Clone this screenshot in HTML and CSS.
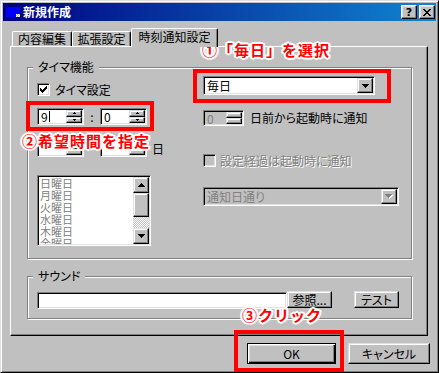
FILE: index.html
```html
<!DOCTYPE html>
<html lang="ja">
<head>
<meta charset="utf-8">
<title>新規作成</title>
<link rel="stylesheet" href="styles.css">
</head>
<body>
<div class="window">
  <div class="titlebar">
    <span class="app-icon"></span>
    <span class="title">新規作成</span>
    <span class="tb-btns">
      <span class="tb-btn help">?</span>
      <span class="tb-btn close"><svg width="8" height="7" viewBox="0 0 8 7" shape-rendering="crispEdges"><path d="M0 0h2v1h-2z M6 0h2v1h-2z M1 1h2v1h-2z M5 1h2v1h-2z M2 2h4v1h-4z M3 3h2v1h-2z M2 4h4v1h-4z M1 5h2v1h-2z M5 5h2v1h-2z M0 6h2v1h-2z M6 6h2v1h-2z"/></svg></span>
    </span>
  </div>

  <div class="client">
    <div class="tabs">
      <div class="tab t1">内容編集</div>
      <div class="tab t2">拡張設定</div>
      <div class="tab t3 sel">時刻通知設定</div>
    </div>

    <div class="panel">
      <div class="group timer">
        <span class="legend">タイマ機能</span>

        <div class="col left">
          <div class="chk-row">
            <span class="chk sunken"><svg width="7" height="7" viewBox="0 0 7 7" shape-rendering="crispEdges"><path d="M0 2h1v3h-1z M1 3h1v3h-1z M2 4h1v3h-1z M3 3h1v3h-1z M4 2h1v3h-1z M5 1h1v3h-1z M6 0h1v3h-1z"/></svg></span>
            <span class="chk-label">タイマ設定</span>
          </div>

          <div class="spin-row r1">
            <div class="spin sunken">
              <span class="val">9<span class="caret"></span></span>
              <span class="sbtns">
                <span class="sbtn raised"><svg width="3" height="2" viewBox="0 0 3 2" shape-rendering="crispEdges"><path d="M1 0h1v1h-1z M0 1h3v1h-3z"/></svg></span>
                <span class="sbtn raised"><svg width="3" height="2" viewBox="0 0 3 2" shape-rendering="crispEdges"><path d="M0 0h3v1h-3z M1 1h1v1h-1z"/></svg></span>
              </span>
            </div>
            <span class="colon">:</span>
            <div class="spin sunken">
              <span class="val">0</span>
              <span class="sbtns">
                <span class="sbtn raised"><svg width="3" height="2" viewBox="0 0 3 2" shape-rendering="crispEdges"><path d="M1 0h1v1h-1z M0 1h3v1h-3z"/></svg></span>
                <span class="sbtn raised"><svg width="3" height="2" viewBox="0 0 3 2" shape-rendering="crispEdges"><path d="M0 0h3v1h-3z M1 1h1v1h-1z"/></svg></span>
              </span>
            </div>
          </div>

          <div class="spin-row r2">
            <div class="spin sunken">
              <span class="val"></span>
              <span class="sbtns">
                <span class="sbtn raised"></span>
                <span class="sbtn raised"></span>
              </span>
            </div>
            <span class="colon"></span>
            <div class="spin sunken">
              <span class="val"></span>
              <span class="sbtns">
                <span class="sbtn raised"></span>
                <span class="sbtn raised"></span>
              </span>
            </div>
            <span class="day">日</span>
          </div>

          <div class="listbox sunken">
            <div class="items">
              <div>日曜日</div>
              <div>月曜日</div>
              <div>火曜日</div>
              <div>水曜日</div>
              <div>木曜日</div>
              <div>金曜日</div>
            </div>
            <div class="scrollbar">
              <span class="sb-btn raised"><svg width="7" height="4" viewBox="0 0 7 4" shape-rendering="crispEdges"><path d="M3 0h1v1h-1z M2 1h3v1h-3z M1 2h5v1h-5z M0 3h7v1h-7z"/></svg></span>
              <span class="sb-thumb raised"></span>
              <span class="sb-track"></span>
              <span class="sb-btn raised"><svg width="7" height="4" viewBox="0 0 7 4" shape-rendering="crispEdges"><path d="M0 0h7v1h-7z M1 1h5v1h-5z M2 2h3v1h-3z M3 3h1v1h-1z"/></svg></span>
            </div>
          </div>
        </div>

        <div class="col right">
          <div class="combo sunken">
            <span class="val">毎日</span>
            <span class="dd raised"><svg width="7" height="4" viewBox="0 0 7 4" shape-rendering="crispEdges"><path d="M0 0h7v1h-7z M1 1h5v1h-5z M2 2h3v1h-3z M3 3h1v1h-1z"/></svg></span>
          </div>

          <div class="spin-row r3">
            <div class="spin dis sunken">
              <span class="val">0</span>
              <span class="sbtns">
                <span class="sbtn raised"></span>
                <span class="sbtn raised"></span>
              </span>
            </div>
            <span class="spin-label">日前から起動時に通知</span>
          </div>

          <div class="chk-row r4">
            <span class="chk dis sunken"></span>
            <span class="chk-label dis-text">設定経過は起動時に通知</span>
          </div>

          <div class="combo dis wide sunken">
            <span class="val">通知日通り</span>
            <span class="dd raised"><svg width="8" height="5" viewBox="0 0 8 5" shape-rendering="crispEdges"><path fill="#fff" d="M1 1h7v1h-7z M2 2h5v1h-5z M3 3h3v1h-3z M4 4h1v1h-1z"/><path fill="#808080" d="M0 0h7v1h-7z M1 1h5v1h-5z M2 2h3v1h-3z M3 3h1v1h-1z"/></svg></span>
          </div>
        </div>
      </div>

      <div class="group sound">
        <span class="legend">サウンド</span>
        <div class="field sunken"></div>
        <div class="btn raised browse">参照...</div>
        <div class="btn raised test">テスト</div>
      </div>
    </div>

    <div class="actions">
      <div class="btn default ok">OK</div>
      <div class="btn raised cancel">キャンセル</div>
    </div>
  </div>

  <div class="mark m1"></div>
  <div class="mark m2"></div>
  <div class="mark m3"></div>
  <div class="note n1">①「毎日」を選択</div>
  <div class="note n2">②希望時間を指定</div>
  <div class="note n3">③クリック</div>
</div>
</body>
</html>
```

FILE: styles.css
```css
* { box-sizing: border-box; }
html, body { margin: 0; padding: 0; }
body {
  background: #c0c0c0;
  font-family: "Noto Sans CJK JP", "Noto Sans", sans-serif;
  font-size: 12px;
  line-height: 14px;
  color: #000;
  font-feature-settings: "palt";
}

.window {
  position: relative;
  width: 439px;
  height: 373px;
  background: #c0c0c0;
  border: 1px solid;
  border-color: #dfdfdf #000 #000 #dfdfdf;
  box-shadow: inset 1px 1px 0 #fff, inset -1px -1px 0 #808080;
  padding: 2px;
}

/* title bar */
.titlebar {
  height: 18px;
  display: flex;
  align-items: center;
  padding: 0 1px 0 3px;
  background: linear-gradient(90deg, #000080, #1084d0);
  color: #fff;
}
.app-icon {
  position: relative;
  flex: 0 0 14px;
  width: 14px;
  height: 10px;
  background: #0000ff;
  margin-right: 3px;
}
.app-icon::after {
  content: "";
  position: absolute;
  right: 0;
  bottom: 0;
  width: 4px;
  height: 3px;
  background-color: #fff;
  background-image: conic-gradient(#c0c0c0 25%, transparent 0 50%, #c0c0c0 0 75%, transparent 0);
  background-size: 2px 2px;
}
.title { font-weight: bold; }
.tb-btns { margin-left: auto; display: flex; gap: 2px; }
.tb-btn {
  width: 16px;
  height: 14px;
  background: #c0c0c0;
  border: 1px solid;
  border-color: #fff #000 #000 #fff;
  box-shadow: inset -1px -1px 0 #808080, inset 1px 1px 0 #dfdfdf;
  display: flex;
  align-items: center;
  justify-content: center;
  color: #000;
  font: bold 11px/1 "DejaVu Sans", sans-serif;
}
.tb-btn.close { padding-top: 1px; }

/* shared bevels */
.sunken {
  border: 1px solid;
  border-color: #808080 #fff #fff #808080;
  box-shadow: inset 1px 1px 0 #000, inset -1px -1px 0 #dfdfdf;
}
.raised {
  background: #c0c0c0;
  border: 1px solid;
  border-color: #dfdfdf #000 #000 #dfdfdf;
  box-shadow: inset -1px -1px 0 #808080, inset 1px 1px 0 #fff;
}

/* client area */
.client { padding: 7px 6px 0 7px; }

.tabs {
  display: flex;
  align-items: flex-end;
  height: 18px;
  padding-left: 2px;
}
.tab {
  height: 15px;
  border-top: 1px solid #fff;
  border-left: 1px solid #fff;
  border-right: 1px solid #000;
  border-radius: 2px 2px 0 0;
  box-shadow: inset -1px 0 0 #808080;
  background: #c0c0c0;
  text-align: center;
  line-height: 14px;
  font-feature-settings: normal;
}
.t1 { width: 60px; }
.t2 { width: 59px; }
.t3 { width: 87px; }
.tab.sel {
  position: relative;
  z-index: 1;
  height: 19px;
  margin-bottom: -1px;
  padding-top: 1px;
}

.panel {
  width: 418px;
  height: 290px;
  border: 1px solid;
  border-color: #fff #000 #000 #fff;
  box-shadow: inset -1px -1px 0 #808080;
  padding: 20px 0 0 16px;
}

.group {
  position: relative;
  width: 385px;
  border: 1px solid #808080;
  box-shadow: 1px 1px 0 #fff, inset 1px 1px 0 #fff;
}
.legend {
  position: absolute;
  left: 5px;
  top: -8px;
  padding: 0 5px;
  background: #c0c0c0;
  line-height: 14px;
}

.timer {
  height: 192px;
  display: grid;
  grid-template-columns: 166px 1fr;
  align-items: start;
  padding: 8px 0 0 9px;
}
.col { display: flex; flex-direction: column; align-items: flex-start; }
.col.left { padding-top: 7px; }

.chk-row { display: flex; align-items: center; height: 13px; }
.chk {
  width: 13px;
  height: 13px;
  background: #fff;
  display: flex;
  align-items: center;
  justify-content: center;
}
.chk.dis { background: #c0c0c0; }
.chk-label { margin-left: 5px; }
.r4 { margin-top: 28px; }
.r4 .chk-label { margin-left: 4px; }
.dis-text { color: #808080; text-shadow: 1px 1px 0 #fff; }

.spin-row { display: flex; align-items: center; height: 17px; }
.r1 { margin-top: 12px; }
.r2 { margin-top: 15px; }
.r3 { margin-top: 15px; height: 16px; }

.spin {
  width: 47px;
  height: 17px;
  background: #fff;
  display: flex;
  padding: 1px;
}
.spin .val { flex: 1; padding-left: 2px; line-height: 13px; display: flex; align-items: center; }
.caret { display: inline-block; width: 1px; height: 11px; background: #000; margin-left: 1px; }
.sbtns { width: 16px; display: flex; flex-direction: column; }
.sbtn { flex: 1; display: flex; align-items: center; justify-content: center; }
.spin.dis { width: 41px; height: 16px; background: #c0c0c0; color: #808080; }
.spin-label { margin-left: 6px; }

.colon { width: 16px; text-align: center; }
.day { margin-left: 5px; }

.listbox {
  margin-top: 18px;
  width: 114px;
  height: 71px;
  background: #fff;
  display: flex;
  padding: 1px;
}
.items {
  flex: 1;
  color: #808080;
  padding-left: 1px;
  font-size: 11px;
  line-height: 12px;
  overflow: hidden;
  font-feature-settings: normal;
}
.scrollbar { width: 16px; display: flex; flex-direction: column; }
.sb-btn { height: 16px; display: flex; align-items: center; justify-content: center; }
.sb-thumb { height: 24px; }
.sb-track {
  flex: 1;
  background-color: #fff;
  background-image: conic-gradient(#c0c0c0 25%, transparent 0 50%, #c0c0c0 0 75%, transparent 0);
  background-size: 2px 2px;
}

.combo {
  width: 172px;
  height: 19px;
  background: #fff;
  display: flex;
  padding: 1px;
}
.combo .val { flex: 1; padding-left: 2px; line-height: 15px; }
.dd { width: 16px; display: flex; align-items: center; justify-content: center; }
.combo.dis { background: #c0c0c0; color: #808080; }
.combo.wide { width: 196px; margin-top: 20px; }

/* sound */
.sound {
  height: 43px;
  margin-top: 17px;
  display: flex;
  align-items: flex-start;
  padding: 14px 0 0 9px;
}
.field { width: 250px; height: 17px; margin-top: 1px; background: #fff; }
.btn { display: flex; align-items: center; justify-content: center; }
.browse { width: 45px; height: 17px; }
.test { width: 45px; height: 17px; margin-left: 22px; }

/* bottom buttons */
.actions {
  display: flex;
  justify-content: flex-end;
  gap: 12px;
  margin-top: 7px;
}
.ok { width: 89px; height: 21px; }
.cancel { width: 82px; height: 21px; }
.btn.default {
  background: #c0c0c0;
  border: 1px solid #000;
  box-shadow: inset 1px 1px 0 #fff, inset -1px -1px 0 #000, inset -2px -2px 0 #808080, inset 2px 2px 0 #dfdfdf;
}

/* annotations */
.mark {
  position: absolute;
  border: 4px solid #ff0000;
}
.m1 { left: 192px; top: 68px; width: 198px; height: 34px; }
.m2 { left: 25px; top: 100px; width: 128px; height: 30px; }
.m3 { left: 233px; top: 329px; width: 110px; height: 42px; }

.note {
  position: absolute;
  font-family: "Noto Sans CJK JP", sans-serif;
  font-weight: bold;
  font-size: 15px;
  line-height: 15px;
  letter-spacing: 1px;
  white-space: nowrap;
  color: #ff0000;
  font-feature-settings: normal;
  text-shadow:
    1px 1px 0 #fff, -1px -1px 0 #fff, 1px -1px 0 #fff, -1px 1px 0 #fff,
    2px 0 0 #fff, -2px 0 0 #fff, 0 2px 0 #fff, 0 -2px 0 #fff,
    2px 1px 0 #fff, -2px 1px 0 #fff, 2px -1px 0 #fff, -2px -1px 0 #fff,
    0 0 3px #fff, 0 0 3px #fff;
}
.n1 { left: 201px; top: 41px; }
.n2 { left: 21px; top: 132px; }
.n3 { left: 241px; top: 306px; }
```
